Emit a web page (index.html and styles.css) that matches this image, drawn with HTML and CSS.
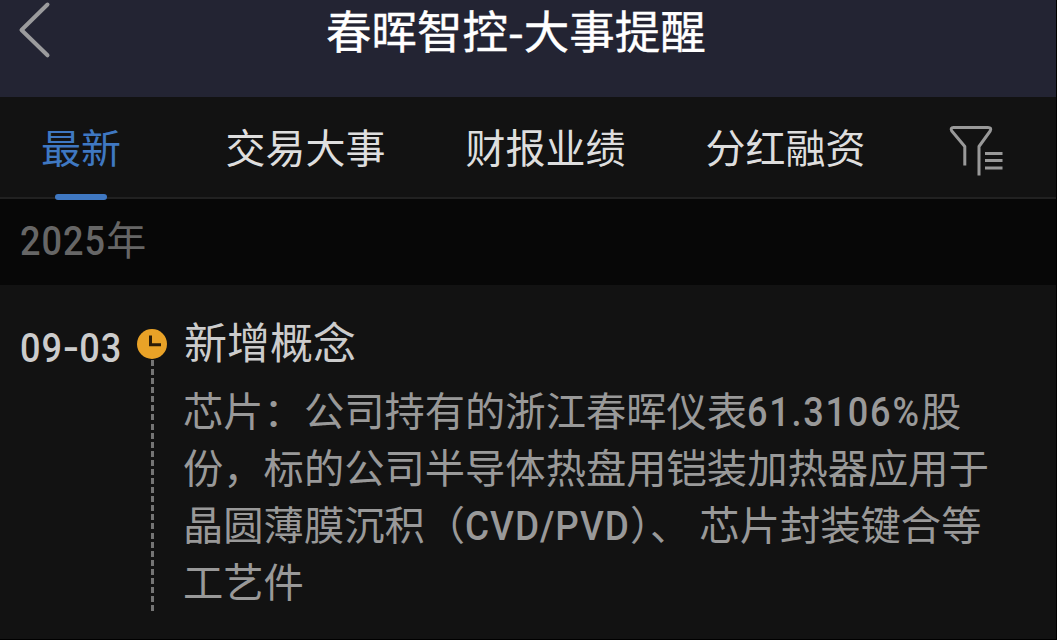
FILE: index.html
```html
<!DOCTYPE html>
<html lang="zh-CN">
<head>
<meta charset="utf-8">
<title>春晖智控-大事提醒</title>
<link rel="stylesheet" href="styles.css">
</head>
<body>
<div class="screen">
  <header class="header">
    <svg class="back" width="40" height="64" viewBox="0 0 40 64"><path d="M31.500 4.500 5.500 30 31.500 55.300"/></svg>
    <h1 class="title">春晖智控-大事提醒</h1>
  </header>
  <nav class="tabs">
    <a class="tab active">最新</a>
    <a class="tab">交易大事</a>
    <a class="tab">财报业绩</a>
    <a class="tab">分红融资</a>
    <svg class="filter" width="56" height="54" viewBox="0 0 56 54"><path d="M15.800 40.500V21.500L2.800 6Q1 2.500 4.500 2.500H39Q43 2.500 41.200 6L30 21.500V50.500M36 28.500H53.500M36 35.500H53.500M36 43H53.500"/></svg>
  </nav>
  <div class="year"><span class="num">2025</span>年</div>
  <main class="event">
    <time class="date num">09<span class="dash">-</span>03</time>
    <div class="rail">
      <svg class="clock" width="32" height="32" viewBox="0 0 32 32"><circle cx="16" cy="16" r="15"/><path d="M14.500 7.500V16.800H25"/></svg>
      <div class="dashes"></div>
    </div>
    <article class="content">
      <h2 class="heading">新增概念</h2>
      <p class="text">芯片：公司持有的浙江春晖仪表<span class="num ratio">61.3106%</span>股<br>份，标的公司半导体热盘用铠装加热器应用于<br>晶圆薄膜沉积（<span class="num latin">CVD/PVD</span>）、 芯片封装键合等<br>工艺件</p>
    </article>
  </main>
</div>
</body>
</html>
```

FILE: styles.css
```css
* { box-sizing: border-box; }
body {
  margin: 0;
  background: #000;
  font-family: "Noto Sans CJK SC", sans-serif;
}
.screen {
  width: 1056px;
  height: 639px;
  overflow: hidden;
  background: #121212;
  display: flex;
  flex-direction: column;
}
.header {
  flex: none;
  height: 97px;
  padding-left: 16px;
  background: #232433;
  display: flex;
  align-items: flex-start;
}
.back { flex: none; }
.back path {
  fill: none;
  stroke: #9b9b9d;
  stroke-width: 4;
  stroke-linecap: round;
  stroke-linejoin: round;
}
.title {
  margin: 0 0 0 270px;
  font-size: 45.500px;
  line-height: 58px;
  font-weight: 400;
  color: #fff;
  white-space: nowrap;
  -webkit-text-stroke: 0.400px currentColor;
}
.tabs {
  flex: none;
  height: 102px;
  padding-left: 41px;
  border-bottom: 2px solid #212121;
  display: flex;
  align-items: flex-start;
}
.tab {
  position: relative;
  flex: none;
  margin-right: 80px;
  font-size: 40px;
  line-height: 98px;
  color: #dedede;
}
.tab.active {
  margin-right: 104.500px;
  color: #3f78c2;
}
.tab.active::after {
  content: "";
  position: absolute;
  left: 14px;
  top: 97px;
  width: 52px;
  height: 6px;
  border-radius: 3px;
  background: #3f78c2;
}
.filter { margin: 28px 0 0 3px; }
.filter path {
  fill: none;
  stroke: #999;
  stroke-width: 3;
  stroke-linejoin: round;
}
/* Condensed figures and capitals with open spacing */
.num {
  display: inline-block;
  font-family: Roboto, "Noto Sans CJK SC", sans-serif;
  font-weight: 500;
  letter-spacing: 1.100px;
  transform: scaleX(0.880);
  transform-origin: left center;
}
.year {
  flex: none;
  height: 86px;
  padding-left: 20px;
  background: #070707;
  color: #666;
  font-size: 40px;
  line-height: 79px;
}
.year .num {
  margin-right: -11.500px;
  font-size: 41px;
  line-height: 1;
}
.event {
  flex: 1;
  padding-left: 20px;
  display: flex;
  align-items: flex-start;
}
.date {
  width: 116px;
  padding-top: 35px;
  font-size: 41px;
  line-height: 56px;
  color: #ccc;
  white-space: nowrap;
}
.dash {
  display: inline-block;
  margin: 0 1px 0 2.500px;
  transform: scaleX(1.300);
}
.rail {
  width: 48px;
  padding-top: 43px;
}
.clock { display: block; }
.clock circle { fill: #e9a227; }
.clock path {
  fill: none;
  stroke: #2b1c08;
  stroke-width: 3;
}
.dashes {
  width: 3px;
  height: 251px;
  margin-left: 15px;
  background: repeating-linear-gradient(#747474 0 6px, transparent 6px 9.080px);
}
.content { white-space: nowrap; }
.heading {
  margin: 27px 0 0;
  font-size: 43px;
  line-height: 56px;
  font-weight: 400;
  color: #ccc;
}
.text {
  margin: 12px 0 0 -1px;
  font-size: 40.300px;
  line-height: 57px;
  color: #999;
}
.text .num { font-size: 41px; line-height: 1; }
.text .ratio {
  margin-right: -23.600px;
  letter-spacing: 2px;
}
.text .latin {
  margin-right: -18.300px;
  transform: scaleX(0.900);
}
```
